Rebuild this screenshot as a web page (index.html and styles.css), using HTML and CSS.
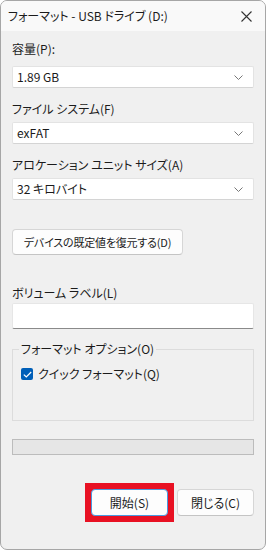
FILE: index.html
```html
<!DOCTYPE html>
<html lang="ja">
<head>
<meta charset="utf-8">
<link rel="stylesheet" href="styles.css">
</head>
<body>
<div class="window">
  <div class="titlebar">
    <span class="title">フォーマット - USB ドライブ (D:)</span>
    <span class="close"><svg width="11" height="11" viewBox="0 0 11 11"><path d="M0.5 0.5 L10.5 10.5 M10.5 0.5 L0.5 10.5" stroke="#333" stroke-width="1.1" fill="none"/></svg></span>
  </div>
  <div class="content">
    <div class="label">容量(P):</div>
    <div class="select"><span>1.89 GB</span><svg class="chev" width="9" height="5" viewBox="0 0 9 5"><path d="M0.5 0.5 L4.5 4.5 L8.5 0.5" stroke="#777" stroke-width="1" fill="none"/></svg></div>

    <div class="label gap">ファイル システム(F)</div>
    <div class="select"><span>exFAT</span><svg class="chev" width="9" height="5" viewBox="0 0 9 5"><path d="M0.5 0.5 L4.5 4.5 L8.5 0.5" stroke="#777" stroke-width="1" fill="none"/></svg></div>

    <div class="label gap">アロケーション ユニット サイズ(A)</div>
    <div class="select"><span>32 キロバイト</span><svg class="chev" width="9" height="5" viewBox="0 0 9 5"><path d="M0.5 0.5 L4.5 4.5 L8.5 0.5" stroke="#777" stroke-width="1" fill="none"/></svg></div>

    <div class="restore-row"><button class="btn restore">デバイスの既定値を復元する(D)</button></div>

    <div class="label vol">ボリューム ラベル(L)</div>
    <div class="input"></div>

    <fieldset class="group">
      <legend>フォーマット オプション(O)</legend>
      <div class="check-row">
        <span class="checkbox"><svg width="9" height="7" viewBox="0 0 9 7"><path d="M0.8 3.6 L3.3 6 L8.2 1" stroke="#fff" stroke-width="1.2" fill="none"/></svg></span>
        <span>クイック フォーマット(Q)</span>
      </div>
    </fieldset>

    <div class="progress"></div>

    <div class="buttons">
      <span class="highlight"><button class="btn primary">開始(S)</button></span>
      <button class="btn">閉じる(C)</button>
    </div>
  </div>
</div>
</body>
</html>
```
FILE: styles.css
```css
* { box-sizing: border-box; }
html, body { margin: 0; padding: 0; background: #ffffff; }
body {
  font-family: "Noto Sans CJK JP", "Noto Sans", sans-serif;
  font-size: 12px;
  font-feature-settings: "palt";
  color: #1b1b1b;
}
.window {
  width: 266px;
  height: 550px;
  border: 1px solid #a6a6a6;
  border-radius: 7px;
  background: #f0f0f0;
  overflow: hidden;
  display: flex;
  flex-direction: column;
}
.titlebar {
  height: 30px;
  background: #f9f9f9;
  display: flex;
  align-items: center;
  justify-content: space-between;
  padding: 0 13px 0 7px;
  flex-shrink: 0;
}
.title { font-size: 12px; line-height: 16px; }
.close { display: flex; align-items: center; }
.content {
  padding: 10px 11px 0 11px;
  display: flex;
  flex-direction: column;
}
.label {
  line-height: 16px;
  height: 16px;
  margin-bottom: 9px;
}
.label.gap { margin-top: 13px; margin-bottom: 5px; }
.select {
  height: 22px;
  background: #ffffff;
  border: 1px solid #e3e3e3;
  border-bottom-color: #d4d4d4;
  border-radius: 2px;
  display: flex;
  align-items: center;
  justify-content: space-between;
  padding: 0 10px 0 4px;
  line-height: 16px;
}
.chev { margin-top: 1px; }
.restore-row { margin-top: 29px; display: flex; }
.btn {
  font-family: inherit;
  font-size: 12px;
  font-feature-settings: "palt";
  color: #1b1b1b;
  background: #fdfdfd;
  border: 1px solid #d6d6d6;
  border-bottom-color: #c4c4c4;
  border-radius: 4px;
  height: 26px;
  line-height: 16px;
  padding: 0 8px;
  margin: 0;
  white-space: nowrap;
}
.restore { width: 171px; padding: 0; font-size: 11px; letter-spacing: -0.2px; }
.label.vol { margin-top: 30px; margin-bottom: 2px; }
.input {
  height: 26px;
  background: #ffffff;
  border: 1px solid #e6e6e6;
  border-bottom: 1px solid #8a8a8a;
  border-radius: 2px;
}
.group {
  margin: 12px 0 0 0;
  padding: 0 0 0 8px;
  border: 1px solid #dcdcdc;
  height: 80px;
  min-width: 0;
}
.group legend {
  padding: 0 2px;
  margin-left: -2px;
  line-height: 16px;
}
.check-row {
  display: flex;
  align-items: center;
  gap: 5px;
  margin-top: 9px;
  line-height: 16px;
}
.checkbox {
  width: 12px;
  height: 12px;
  border-radius: 2px;
  background: #005fb8;
  display: flex;
  align-items: center;
  justify-content: center;
}
.progress {
  margin-top: 18px;
  height: 16px;
  background: #e6e6e6;
  border: 1px solid #bcbcbc;
}
.buttons {
  margin-top: 28px;
  display: flex;
  justify-content: flex-end;
  align-items: center;
  gap: 3px;
}
.buttons .btn { width: 77px; height: 27px; }
.primary { border: 1px solid #4a9ae0; }
.highlight { display: flex; padding: 6px; background: #e81123; }
```
